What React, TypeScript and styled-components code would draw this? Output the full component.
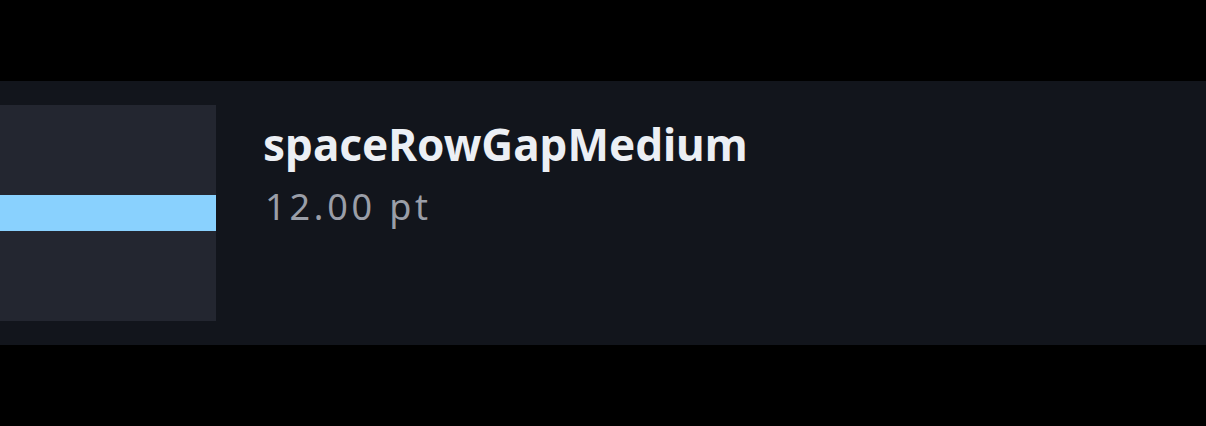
import React from "react";
import styled, { createGlobalStyle } from "styled-components";

const Global = createGlobalStyle`
  html, body { margin: 0; padding: 0; background: #000000; }
  body { font-family: "Comic Sans MS", "Noto Sans", sans-serif; }
`;

const Page = styled.div`
  padding-top: 81px;
  width: 1206px;
  height: 426px;
  box-sizing: border-box;
  overflow: hidden;
`;

const Panel = styled.section`
  background: #12151c;
  height: 264px;
  box-sizing: border-box;
  padding: 24px 24px 24px 0;
  display: flex;
  gap: 47px;
  align-items: flex-start;
`;

const Preview = styled.div`
  width: 216px;
  height: 216px;
  flex: none;
  background: #232630;
  display: flex;
  align-items: center;
`;

const Bar = styled.div<{ $h: number }>`
  width: 100%;
  height: ${(p) => p.$h}px;
  background: #89d1fe;
`;

const Info = styled.div`
  display: flex;
  flex-direction: column;
  padding-top: 13px;
`;

const Title = styled.h2`
  margin: 0;
  font-family: "Comic Sans MS", "Noto Sans", sans-serif;
  font-weight: 700;
  font-size: 44px;
  line-height: 52px;
  color: #eceff4;
  letter-spacing: 0;
`;

const Value = styled.div`
  margin-top: 15px;
  padding-left: 2px;
  font-family: "Comic Sans MS", "Noto Sans", sans-serif;
  font-weight: 400;
  font-size: 36px;
  line-height: 44px;
  letter-spacing: 3.8px;
  color: #9a9ea8;
`;

export default function App() {
  return (
    <>
      <Global />
      <Page>
        <Panel>
          <Preview>
            <Bar $h={36} />
          </Preview>
          <Info>
            <Title>spaceRowGapMedium</Title>
            <Value>12.00 pt</Value>
          </Info>
        </Panel>
      </Page>
    </>
  );
}
